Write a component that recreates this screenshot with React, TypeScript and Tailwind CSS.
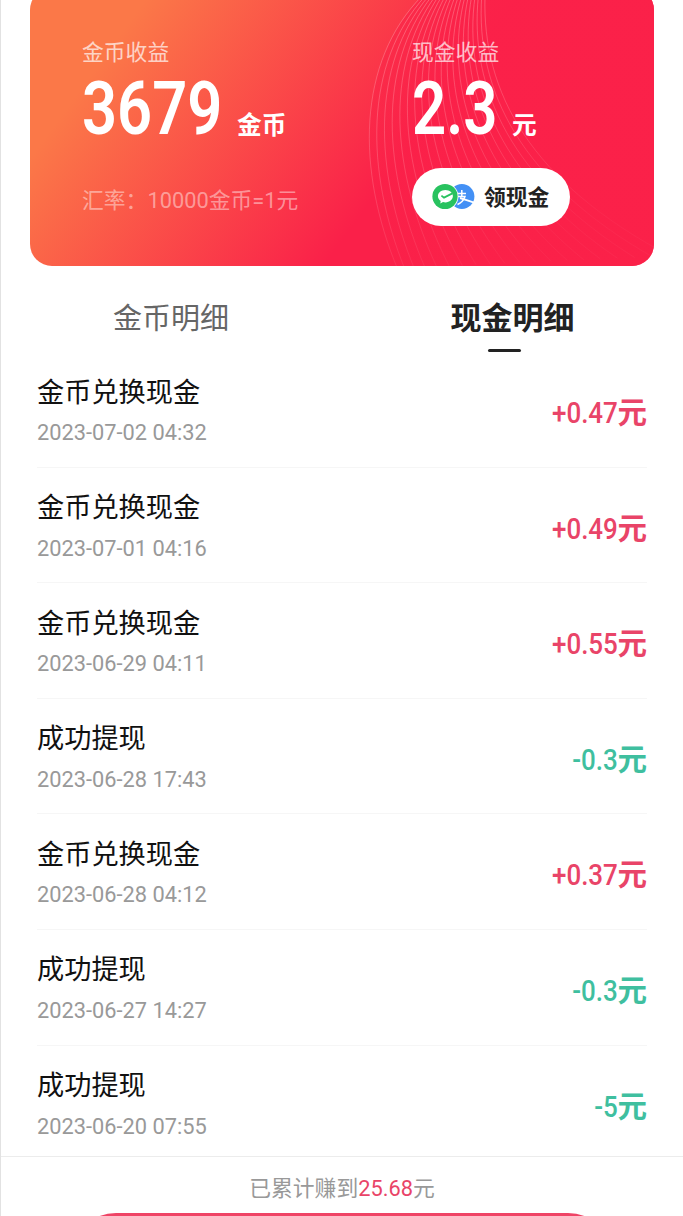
import React from 'react';

type Entry = {
  title: string;
  time: string;
  amount: string;
  income: boolean;
};

const entries: Entry[] = [
  { title: '金币兑换现金', time: '2023-07-02 04:32', amount: '+0.47', income: true },
  { title: '金币兑换现金', time: '2023-07-01 04:16', amount: '+0.49', income: true },
  { title: '金币兑换现金', time: '2023-06-29 04:11', amount: '+0.55', income: true },
  { title: '成功提现', time: '2023-06-28 17:43', amount: '-0.3', income: false },
  { title: '金币兑换现金', time: '2023-06-28 04:12', amount: '+0.37', income: true },
  { title: '成功提现', time: '2023-06-27 14:27', amount: '-0.3', income: false },
  { title: '成功提现', time: '2023-06-20 07:55', amount: '-5', income: false },
];

const RING_COUNT = 20;

// each ring is a blend between the outer and the inner curve,
// the rings fan out towards the lower right corner
function ringPath(t: number) {
  const mix = (a: number, b: number) => (a + (b - a) * t).toFixed(1);
  const fan = (a: number, b: number) => (a + (b - a) * Math.pow(t, 1.25)).toFixed(1);
  return `M${mix(392, 455)} -4 C${mix(327, 452)} ${mix(62, 92)} ${mix(326, 500)} ${mix(170, 182)} ${fan(368, 640)} ${mix(270, 256)}`;
}

function Rings() {
  return (
    <svg className="absolute bottom-0 left-0" width="625" height="266" viewBox="0 0 625 266" fill="none">
      <path d="M392 -4 C327 62 326 170 368 270 L625 270 L625 -4 Z" fill="url(#ringShade)" />
      {Array.from({ length: RING_COUNT }, (_, i) => (
        <path key={i} d={ringPath(i / (RING_COUNT - 1))} stroke="url(#ringFade)" strokeWidth="0.9" />
      ))}
      <defs>
        <linearGradient id="ringShade" gradientUnits="userSpaceOnUse" x1="345" y1="0" x2="440" y2="0">
          <stop offset="0" stopColor="#fb2149" stopOpacity="0.4" />
          <stop offset="1" stopColor="#fb2149" stopOpacity="0.85" />
        </linearGradient>
        <linearGradient id="ringFade" gradientUnits="userSpaceOnUse" x1="380" y1="0" x2="510" y2="240">
          <stop offset="0" stopColor="#ffa0a8" stopOpacity="0.5" />
          <stop offset="0.5" stopColor="#ff90a0" stopOpacity="0.36" />
          <stop offset="1" stopColor="#ff90a0" stopOpacity="0.07" />
        </linearGradient>
      </defs>
    </svg>
  );
}

function PayIcons() {
  return (
    <svg className="-mt-px" width="43" height="27" viewBox="0 0 43 27">
      <circle cx="29.9" cy="13.5" r="12.5" fill="#4390f5" />
      <g stroke="#fff" strokeWidth="1.5" fill="none">
        <path d="M24 10.6H34M29.8 7V13.4M25 13.4H33C31.5 17.5 29 20 25.5 21.5" />
        <path d="M28 15C32 16 36 18 42 19.6" strokeWidth="1.9" />
      </g>
      <circle cx="13" cy="13.5" r="13.4" fill="#fff" />
      <circle cx="13" cy="13.5" r="12.6" fill="#28c25f" />
      <path d="M13.4 6.9C9.2 6.9 5.9 9.7 5.9 13.1C5.9 15.1 7 16.9 8.7 18L8.3 20.5L11 19.1C11.8 19.3 12.6 19.4 13.4 19.4C17.6 19.4 20.9 16.6 20.9 13.1C20.9 9.7 17.6 6.9 13.4 6.9Z" fill="#fff" />
      <path d="M9.4 12.6L12 14.6L20.4 10.4" stroke="#28c25f" strokeWidth="1.8" fill="none" />
    </svg>
  );
}

export default function App() {
  return (
    <div className="flex h-[1216px] w-[683px] flex-col overflow-hidden border-l border-[#e2e2e2] bg-white font-['Roboto','Noto_Sans_CJK_SC',sans-serif]">
      {/* Balance card */}
      <section className="relative -mt-3 ml-[28.5px] h-[277.5px] w-[624.5px] shrink-0 overflow-hidden rounded-[22px] bg-[linear-gradient(126deg,#fb7848_15%,#fa2049_60%)]">
        <Rings />
        <div className="relative flex pt-[13px]">
          <div className="w-[330px] pl-[52.5px] pt-[36px] text-white">
            <div className="h-8 text-[21.8px] leading-8 text-white/70">金币收益</div>
            <div className="flex h-[80px] items-baseline">
              <span className="w-[155px] origin-left scale-x-[0.83] whitespace-nowrap text-[74px] font-semibold leading-[80px]">3679</span>
              <span className="text-[24.7px] font-bold leading-[30px]">金币</span>
            </div>
            <div className="mt-[36px] h-8 whitespace-nowrap text-[21.8px] leading-8 text-white/45">汇率：10000金币=1元</div>
          </div>
          <div className="pl-[52.5px] pt-[36px] text-white">
            <div className="h-8 text-[21.8px] leading-8 text-white/70">现金收益</div>
            <div className="flex h-[80px] items-baseline">
              <span className="w-[100px] origin-left scale-x-[0.81] whitespace-nowrap text-[74px] font-semibold leading-[80px]">2.3</span>
              <span className="text-[24.7px] font-bold leading-[30px]">元</span>
            </div>
            <button className="mt-[19px] flex h-[58px] w-[158px] items-center rounded-full bg-white pl-[20px]">
              <PayIcons />
              <span className="ml-[9px] whitespace-nowrap pt-[3px] text-[21.8px] font-bold text-[#222]">领现金</span>
            </button>
          </div>
        </div>
      </section>

      {/* Tabs */}
      <nav className="flex h-[86.5px] shrink-0 pt-[31.5px]">
        <div className="w-[340px] text-center text-[29px] leading-[44px] text-[#666]">金币明细</div>
        <div className="flex flex-1 flex-col items-center pl-px">
          <span className="text-[31px] font-bold leading-[44px] text-[#222]">现金明细</span>
          <span className="mr-[17px] mt-[8px] h-[4px] w-[33px] rounded-full bg-[#222]" />
        </div>
      </nav>

      {/* Records */}
      <ul className="h-[804px] shrink-0 overflow-hidden pl-[36px] pr-[36px]">
        {entries.map(item => (
          <li key={item.time} className="flex h-[115.6px] justify-between border-b border-[#f6f6f6]">
            <div className="pt-[19.5px]">
              <div className="text-[27.2px] leading-[42px] text-[#111]">{item.title}</div>
              <div className="mt-[3.5px] text-[21.8px] leading-[32px] text-[#999]">{item.time}</div>
            </div>
            <div className={`flex items-baseline pt-[40px] leading-[42px] ${item.income ? 'text-[#e94468]' : 'text-[#3fbf9f]'}`}>
              <span className="origin-right scale-x-[0.88] text-[29.5px] font-medium">{item.amount}</span>
              <span className="text-[29.5px] font-bold">元</span>
            </div>
          </li>
        ))}
      </ul>

      {/* Footer */}
      <footer className="flex flex-1 shrink-0 flex-col items-center border-t border-[#ececec]">
        <p className="mt-[16px] h-[32px] text-[21.8px] leading-[32px] text-[#999]">
          已累计赚到<span className="text-[#e94468]">25.68</span>元
        </p>
        <div className="mt-[7.5px] h-[92px] w-[544px] shrink-0 rounded-full bg-[#ef4466]" />
      </footer>
    </div>
  );
}
